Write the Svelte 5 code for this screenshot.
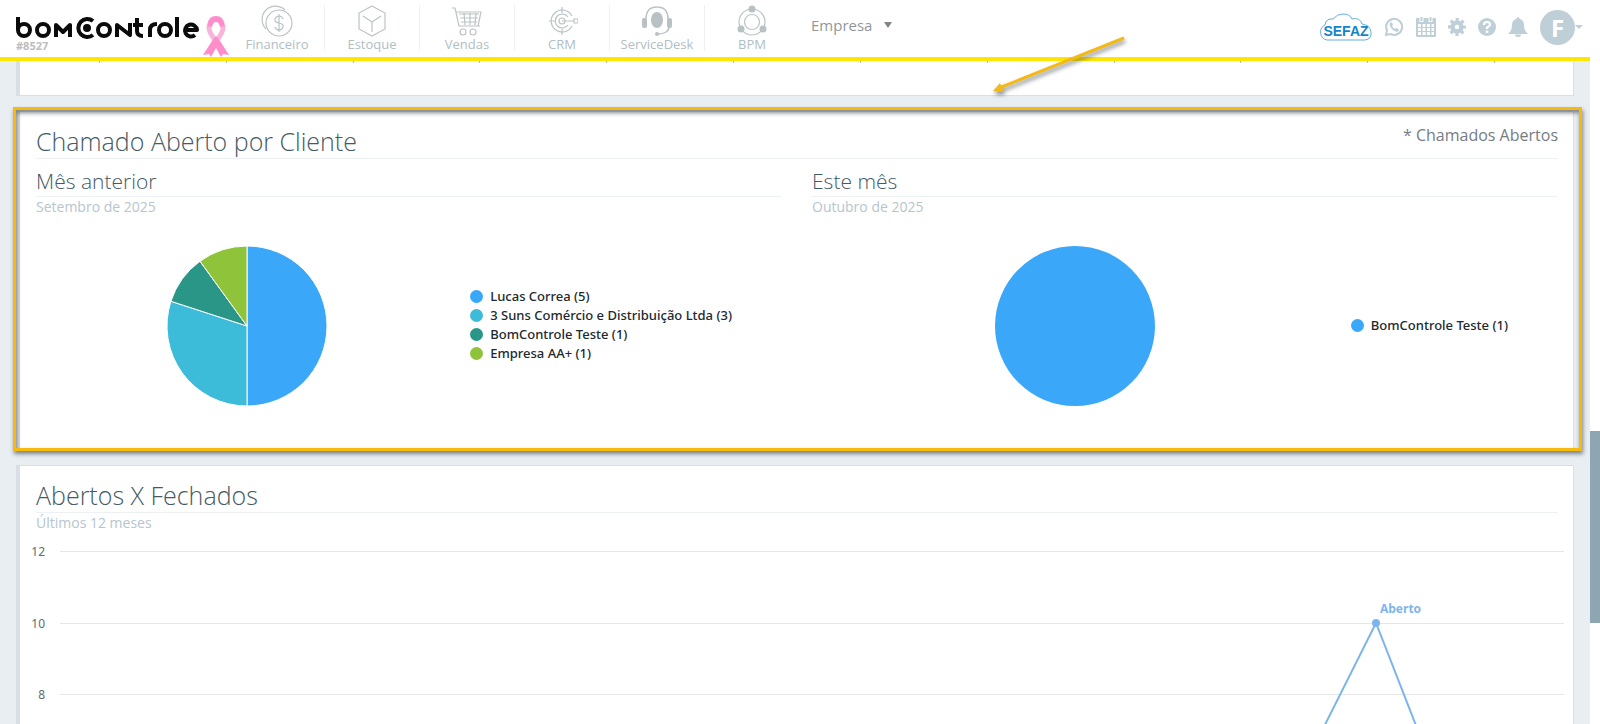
<script lang="ts">
  type Slice = { name: string; value: number; color: string };
  type PieChart = { title: string; period: string; slices: Slice[] };

  const modules = ['Financeiro', 'Estoque', 'Vendas', 'CRM', 'ServiceDesk', 'BPM'];

  const pies: PieChart[] = [
    {
      title: 'Mês anterior',
      period: 'Setembro de 2025',
      slices: [
        { name: 'Lucas Correa', value: 5, color: '#3aa7f9' },
        { name: '3 Suns Comércio e Distribuição Ltda', value: 3, color: '#3cbcd8' },
        { name: 'BomControle Teste', value: 1, color: '#2a9688' },
        { name: 'Empresa AA+', value: 1, color: '#8fc43a' },
      ],
    },
    {
      title: 'Este mês',
      period: 'Outubro de 2025',
      slices: [{ name: 'BomControle Teste', value: 1, color: '#3aa7f9' }],
    },
  ];

  const radius = 80;

  function point(ratio: number) {
    const angle = ratio * 2 * Math.PI - Math.PI / 2;
    return `${radius * Math.cos(angle)} ${radius * Math.sin(angle)}`;
  }

  // Turn the slices into SVG wedges, clockwise from 12 o'clock
  function wedges(slices: Slice[]) {
    const total = slices.reduce((sum, s) => sum + s.value, 0);
    let start = 0;
    return slices.map((s) => {
      const end = start + s.value / total;
      const large = end - start > 0.5 ? 1 : 0;
      const d = `M0 0 L${point(start)} A${radius} ${radius} 0 ${large} 1 ${point(end)} Z`;
      start = end;
      return { d, color: s.color };
    });
  }

  // Line chart scales
  const months = 12;
  const top = 13;
  const plotLeft = 40;
  const plotHeight = 429;
  const ticks = [12, 10, 8];
  const opened = [
    { month: 9, value: 3 },
    { month: 10, value: 10 },
    { month: 11, value: 1 },
  ];

  let chartWidth = $state(1553);
  let plotRight = $derived(chartWidth - 9);
  const y = (value: number) => Math.round(top + (plotHeight * (12 - value)) / 12);
  const x = (month: number) => plotLeft + ((plotRight - plotLeft) * (month + 0.5)) / months;
  let line = $derived(opened.map((p) => `${x(p.month)},${y(p.value)}`).join(' '));
</script>

<div class="page">
  <div class="app">
    <header>
      <a class="brand" href="#inicio" aria-label="bomControle">
        <svg class="logo" width="183" height="24" viewBox="0 0 183 24" fill="none" stroke="#0b0b0b" stroke-width="4" stroke-linejoin="round">
          <path d="M2 1v13" />
          <circle cx="8" cy="14" r="6" />
          <circle cx="27" cy="14" r="6" />
          <path d="M40 21V9l7 7 7-7v12" />
          <path d="M77 5a9 9 0 1 0 0 14" />
          <circle cx="71" cy="12" r="2" />
          <circle cx="88" cy="14" r="6" />
          <path d="M101 21V9l13 10V7M121 2v13q0 5 6 5M117 9h10M134 21v-7q0-6 7-6" />
          <circle cx="149" cy="14" r="6" />
          <path d="M161 1v20M169 14h12a6 6 0 1 0-2 5" />
        </svg>
        <small>#8527</small>
      </a>
      <svg class="ribbon" width="26" height="42" viewBox="0 0 26 42" fill="none">
        <path d="M6 10q-1 6 7 15M20 10q1 6-7 15" stroke="#f9b4da" stroke-width="5" />
        <path d="M4 10C5 3 8 0 13 0s8 3 9 10l-5 1q-1-5-4-5t-4 5Z" fill="#ff8ccb" />
        <path d="m13 20 4 5 9 14-6-1-2 3-5-9-5 9-2-3-6 1 9-14Z" fill="#ff8ccb" />
      </svg>

      <nav>
        {#each modules as name}
          <a href="#{name.toLowerCase()}">
            <svg width="32" height="32" viewBox="0 0 32 32" fill="none" stroke="#bcc3c6" stroke-width="1.2">
              {#if name === 'Financeiro'}
                <circle cx="18" cy="18" r="13" />
                <path d="M5 24A13 13 0 1 1 24 5" />
                <path d="M22 14q-1-3-4-3t-4 3 4 4 4 4-4 3-4-3M18 9v18" />
              {:else if name === 'Estoque'}
                <path d="M16 1 29 8v16l-13 7-13-7V8ZM7 11l9 6 9-6M16 17v10" />
              {:else if name === 'Vendas'}
                <path d="M1 3h3l4 18h21M5 7h25l-3 14M8 9h20M9 13h18M10 17h16M13 8l1 12M19 8v12M25 8l-1 12" />
                <circle cx="12" cy="27" r="3" /><circle cx="22" cy="27" r="3" />
              {:else if name === 'CRM'}
                <path d="M26 11A11 11 0 1 0 26 21M22 12a7 7 0 1 0 0 8" />
                <circle cx="16" cy="16" r="3" />
                <path d="M16 16h12M28 14h4v4h-4ZM16 2v6M16 24v6M3 16h6" />
              {:else if name === 'ServiceDesk'}
                <path d="M5 14C5 6 9 2 16 2s11 4 11 12M28 22c0 4-4 7-11 7" stroke-width="1.5" />
                <g fill="#b8c1c4" stroke="none">
                  <ellipse cx="16" cy="15" rx="6" ry="8" />
                  <rect x="1" y="13" width="5" height="10" rx="2" />
                  <rect x="26" y="13" width="5" height="10" rx="2" />
                  <ellipse cx="16" cy="29" rx="2" ry="2" />
                </g>
              {:else}
                <circle cx="16" cy="17" r="13" /><circle cx="16" cy="17" r="7.5" />
                <g fill="#b8c1c4" stroke="none">
                  <circle cx="16" cy="4" r="3.5" /><circle cx="5" cy="24" r="3.5" /><circle cx="27" cy="24" r="3.5" />
                </g>
              {/if}
            </svg>
            <span>{name}</span>
          </a>
        {/each}
      </nav>

      <button class="company">Empresa <span class="caret"></span></button>

      <div class="tools">
        <button aria-label="SEFAZ">
          <svg width="54" height="28" viewBox="0 0 54 28">
            <path d="M9 27a8 8 0 0 1-2-15Q8 5 15 6 19 1 25 1q7 0 9 5 8-2 10 5 8 1 9 8t-6 8Z" fill="#fff" stroke="#65aee0" />
            <text x="28" y="23" text-anchor="middle" class="sefaz">SEFAZ</text>
          </svg>
        </button>
        <button aria-label="WhatsApp">
          <svg width="20" height="20" viewBox="0 0 20 20">
            <path d="M2 18l1-4.500A8 8 0 1 1 6.500 17Z" fill="none" stroke="#bfcfd8" stroke-width="2" />
            <path d="M7 5 5.500 7q1 6 7.500 8l2-1.500-.5-1.500-2.500-1-1 1q-2-1-3-3l1-1-1-2.500Z" fill="#bfcfd8" />
          </svg>
        </button>
        <button aria-label="Agenda">
          <svg width="20" height="22" viewBox="0 0 20 22">
            <path d="M1 3h18v17H1Z" fill="#bfcfd8" stroke="#bfcfd8" stroke-width="2" stroke-linejoin="round" />
            <path d="M2 8h3v3H2Zm4.500 0h3v3h-3Zm4.500 0h3v3h-3Zm4.500 0h2.500v3h-2.500ZM2 12h3v3H2Zm4.500 0h3v3h-3Zm4.500 0h3v3h-3Zm4.500 0h2.500v3h-2.500ZM2 16h3v3H2Zm4.500 0h3v3h-3Zm4.500 0h3v3h-3Zm4.500 0h2.500v3h-2.500Z" fill="#fff" />
            <path d="M5.500 0v6M14.500 0v6" stroke="#fff" stroke-width="4" /><path d="M5.500 1v4M14.500 1v4" stroke="#bfcfd8" stroke-width="2" />
          </svg>
        </button>
        <button aria-label="Configurações">
          <svg width="18" height="18" viewBox="0 0 20 20" fill="none" stroke="#bfcfd8">
            <circle cx="10" cy="10" r="5" stroke-width="5" />
            <circle cx="10" cy="10" r="8" stroke-width="4" stroke-dasharray="3.280 3" stroke-dashoffset="1.640" />
          </svg>
        </button>
        <button aria-label="Ajuda">
          <svg width="18" height="18" viewBox="0 0 18 18">
            <circle cx="9" cy="9" r="9" fill="#bfcfd8" />
            <path d="M6 7q0-3 3-3t3 2.500Q12 8 9 9.500V11" fill="none" stroke="#fff" stroke-width="2.200" />
            <path d="M7.800 12.500h2.500V15H7.800Z" fill="#fff" />
          </svg>
        </button>
        <button aria-label="Notificações">
          <svg width="20" height="20" viewBox="0 0 20 20" fill="#bfcfd8">
            <path d="M10 0q1.200 0 1.500 1.700Q16 3 16 8q0 6 4 9H0q4-3 4-9 0-5 4.500-6.300Q8.800 0 10 0ZM7 17.500h6a3 2.500 0 0 1-6 0Z" />
          </svg>
        </button>
        <button class="user" aria-label="Usuário">
          <span class="avatar">F</span>
          <span class="caret light"></span>
        </button>
      </div>
    </header>

    <main>
      <!-- End of the chart above, scrolled under the header -->
      <section class="card previous">
        {#each { length: months } as _}
          <span class="mark"></span>
        {/each}
      </section>

      <section class="card customers">
        <div class="heading">
          <h2>Chamado Aberto por Cliente</h2>
          <span class="note">* Chamados Abertos</span>
        </div>
        <div class="columns">
          {#each pies as pie}
            <div class="column">
              <h3>{pie.title}</h3>
              <p class="period">{pie.period}</p>
              <div class="pie">
                <svg width="162" height="162" viewBox="-81 -81 162 162">
                  {#if pie.slices.length === 1}
                    <circle r={radius} fill={pie.slices[0].color} />
                  {:else}
                    {#each wedges(pie.slices) as wedge}
                      <path d={wedge.d} fill={wedge.color} stroke="#fff" stroke-linejoin="round" />
                    {/each}
                  {/if}
                </svg>
                <ul>
                  {#each pie.slices as slice}
                    <li><span class="dot" style="background: {slice.color}"></span>{slice.name} ({slice.value})</li>
                  {/each}
                </ul>
              </div>
            </div>
          {/each}
        </div>

        <div class="highlight"></div>
        <svg class="arrow" width="140" height="66" viewBox="0 0 140 66">
          <path d="M137 5 12 55" stroke="#f5b915" stroke-width="3" />
          <path d="m6 58 7-8 4 9Z" fill="#f5b915" />
        </svg>
      </section>

      <section class="card">
        <div class="heading">
          <h2>Abertos X Fechados</h2>
        </div>
        <p class="period">Últimos 12 meses</p>
        <div class="chart" bind:clientWidth={chartWidth}>
          <svg width={chartWidth} height="470">
            {#each ticks as tick}
              <line x1={plotLeft} x2={plotRight} y1={y(tick)} y2={y(tick)} class="grid" />
              <text x="25" y={y(tick) + 5} text-anchor="end" class="tick">{tick}</text>
            {/each}
            <polyline points={line} fill="none" stroke="#7cb5ec" stroke-width="2" />
            {#each opened as p}
              <circle cx={x(p.month)} cy={y(p.value)} r="4" fill="#7cb5ec" />
            {/each}
            <text x={x(10) + 4} y={y(10) - 10} class="series">Aberto</text>
          </svg>
        </div>
      </section>
    </main>
  </div>

  <div class="scrollbar"><div class="thumb"></div></div>
</div>

<style>
  :global(body) {
    overflow: hidden;
    font-family: 'Open Sans', sans-serif;
  }

  .page {
    display: flex;
    height: 100vh;
    background: #fff;
  }

  .app {
    flex: 1;
    min-width: 0;
    display: flex;
    flex-direction: column;
    overflow: hidden;
    background: #e8eef2;
  }

  header {
    display: flex;
    align-items: flex-start;
    flex: none;
    height: 57px;
    padding-left: 16px;
    background: #fff;
    border-bottom: 4px solid #ffe600;
  }

  .brand {
    display: flex;
    flex-direction: column;
    padding-top: 16px;
    color: #bdbdbd;
    text-decoration: none;
  }

  .brand small {
    font-size: 11px;
    font-weight: 700;
    line-height: 12px;
  }

  .ribbon {
    margin: 16px 0 0 4px;
  }

  nav {
    display: flex;
    padding: 5px 0 0 1px;
  }

  nav a {
    display: flex;
    flex-direction: column;
    align-items: center;
    width: 94px;
    height: 46px;
    color: #b0bec5;
    font-size: 13px;
    line-height: 14px;
    text-decoration: none;
  }

  nav a + a {
    border-left: 1px solid #eef1f3;
  }

  button {
    display: flex;
    align-items: center;
    padding: 0;
    border: 0;
    background: none;
    font-family: inherit;
    cursor: pointer;
  }

  .company {
    gap: 12px;
    margin: 14px 0 0 12px;
    color: #8f979c;
    font-size: 15px;
    line-height: 22px;
  }

  .caret {
    border: 4px solid transparent;
    border-top: 6px solid #7d868b;
    border-bottom: 0;
  }

  .caret.light {
    border-top: 4px solid #bfcfd8;
  }

  .tools {
    display: flex;
    align-items: center;
    gap: 12px;
    height: 54px;
    margin-left: auto;
    padding-right: 7px;
  }

  .sefaz {
    fill: #1485c9;
    font-family: 'Liberation Sans', sans-serif;
    font-size: 14px;
    font-weight: 700;
  }

  .avatar {
    width: 35px;
    border-radius: 50%;
    background: #bfcfd8;
    color: #fff;
    font-size: 24px;
    font-weight: 700;
    line-height: 35px;
    text-align: center;
  }

  main {
    flex: 1;
    min-height: 0;
    padding: 0 16px;
  }

  .card {
    margin-bottom: 15px;
    padding: 0 15px 0 16px;
    border: 1px solid #d8e0e6;
    border-left-width: 4px;
    background: #fff;
  }

  .previous {
    display: flex;
    justify-content: space-around;
    height: 34px;
    border-top: 0;
  }

  .mark {
    width: 1px;
    height: 2px;
    background: #b4b8ba;
  }

  .customers {
    position: relative;
    height: 337px;
  }

  .heading {
    display: flex;
    justify-content: space-between;
    height: 46px;
    border-bottom: 1px solid #edf1f4;
  }

  h2,
  h3,
  p,
  ul {
    margin: 0;
    padding: 0;
  }

  h2 {
    padding-top: 11px;
    color: #455a64;
    font-size: 25px;
    font-weight: 300;
    line-height: 36px;
  }

  .note {
    padding-top: 11px;
    color: #757d82;
    font-size: 16px;
    line-height: 24px;
  }

  .columns {
    display: grid;
    grid-template-columns: 1fr 1fr;
    gap: 30px;
  }

  h3 {
    height: 37px;
    border-bottom: 1px solid #edf1f4;
    color: #455a64;
    font-size: 21px;
    font-weight: 300;
    line-height: 44px;
  }

  .period {
    color: #b7c5cd;
    font-size: 14px;
    line-height: 20px;
  }

  .pie {
    display: flex;
    align-items: center;
    padding: 28px 50px 0 0;
  }

  .pie svg {
    margin: 0 auto;
  }

  ul {
    margin-left: 12px;
    padding-bottom: 2px;
    list-style: none;
  }

  li {
    display: flex;
    align-items: center;
    gap: 7px;
    color: #22292e;
    font-family: 'Noto Sans', sans-serif;
    font-size: 13px;
    font-weight: 500;
    line-height: 19px;
  }

  .dot {
    width: 13px;
    height: 13px;
    border-radius: 50%;
  }

  /* Callout drawn over the card */
  .highlight {
    position: absolute;
    inset: -5px -9px -2px -7px;
    border: 3px solid #f8b90f;
    box-shadow: 1px 3px 4px rgba(50, 60, 70, 0.6), inset 1px 3px 4px rgba(50, 60, 70, 0.6);
    pointer-events: none;
  }

  .arrow {
    position: absolute;
    top: -79px;
    left: 967px;
    filter: drop-shadow(1px 3px 2px rgba(50, 60, 70, 0.6));
    pointer-events: none;
  }

  .chart {
    height: 470px;
    margin: 5px -15px 0 -16px;
  }

  .grid {
    stroke: #e6e6e6;
    shape-rendering: crispEdges;
  }

  .tick {
    fill: #606c72;
    font-family: 'Noto Sans', sans-serif;
    font-size: 12px;
  }

  .series {
    fill: #7cb5ec;
    font-size: 12px;
    font-weight: 700;
  }

  .scrollbar {
    width: 10px;
    background: #fff;
  }

  .thumb {
    height: 192px;
    margin-top: 431px;
    background: #8ea5b2;
  }
</style>
